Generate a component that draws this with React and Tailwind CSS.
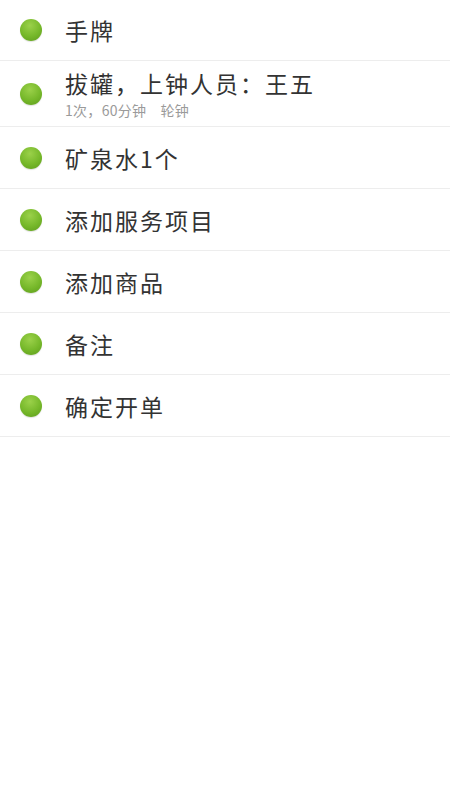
import React from 'react';

const items = [
  { title: '手牌', h: 'h-[61px]' },
  { title: '拔罐，上钟人员：王五', sub: '1次，60分钟', tag: '轮钟', h: 'h-[66px]' },
  { title: '矿泉水1个', h: 'h-[62px]' },
  { title: '添加服务项目', h: 'h-[62px]' },
  { title: '添加商品', h: 'h-[62px]' },
  { title: '备注', h: 'h-[62px]' },
  { title: '确定开单', h: 'h-[62px]' },
];

const Dot = () => (
  <span className="block w-[22px] h-[22px] rounded-full shrink-0 bg-[radial-gradient(circle_at_45%_30%,#9bd14a_0%,#76b82a_55%,#5c9a1c_100%)] shadow-[0_1px_1px_rgba(0,0,0,0.12)]" />
);

export default function App() {
  return (
    <div
      className="min-h-[800px] bg-white"
      style={{ fontFamily: '"Noto Sans CJK SC", "Noto Sans", sans-serif' }}
    >
      {items.map((item) => (
        <div
          key={item.title}
          className={`flex items-center ${item.h} border-b border-[#ededed]`}
        >
          <div className="w-[65px] flex justify-center pr-[3px]">
            <Dot />
          </div>
          <div className="flex flex-col">
            <span className="text-[23px] leading-[28px] text-[#333333] tracking-[2px]">
              {item.title}
            </span>
            {item.sub && (
              <span className="text-[14px] leading-[18px] text-[#9a9a9a] tracking-[0.3px] mt-[4px]">
                {item.sub}
                <span className="ml-[14px]">{item.tag}</span>
              </span>
            )}
          </div>
        </div>
      ))}
    </div>
  );
}
